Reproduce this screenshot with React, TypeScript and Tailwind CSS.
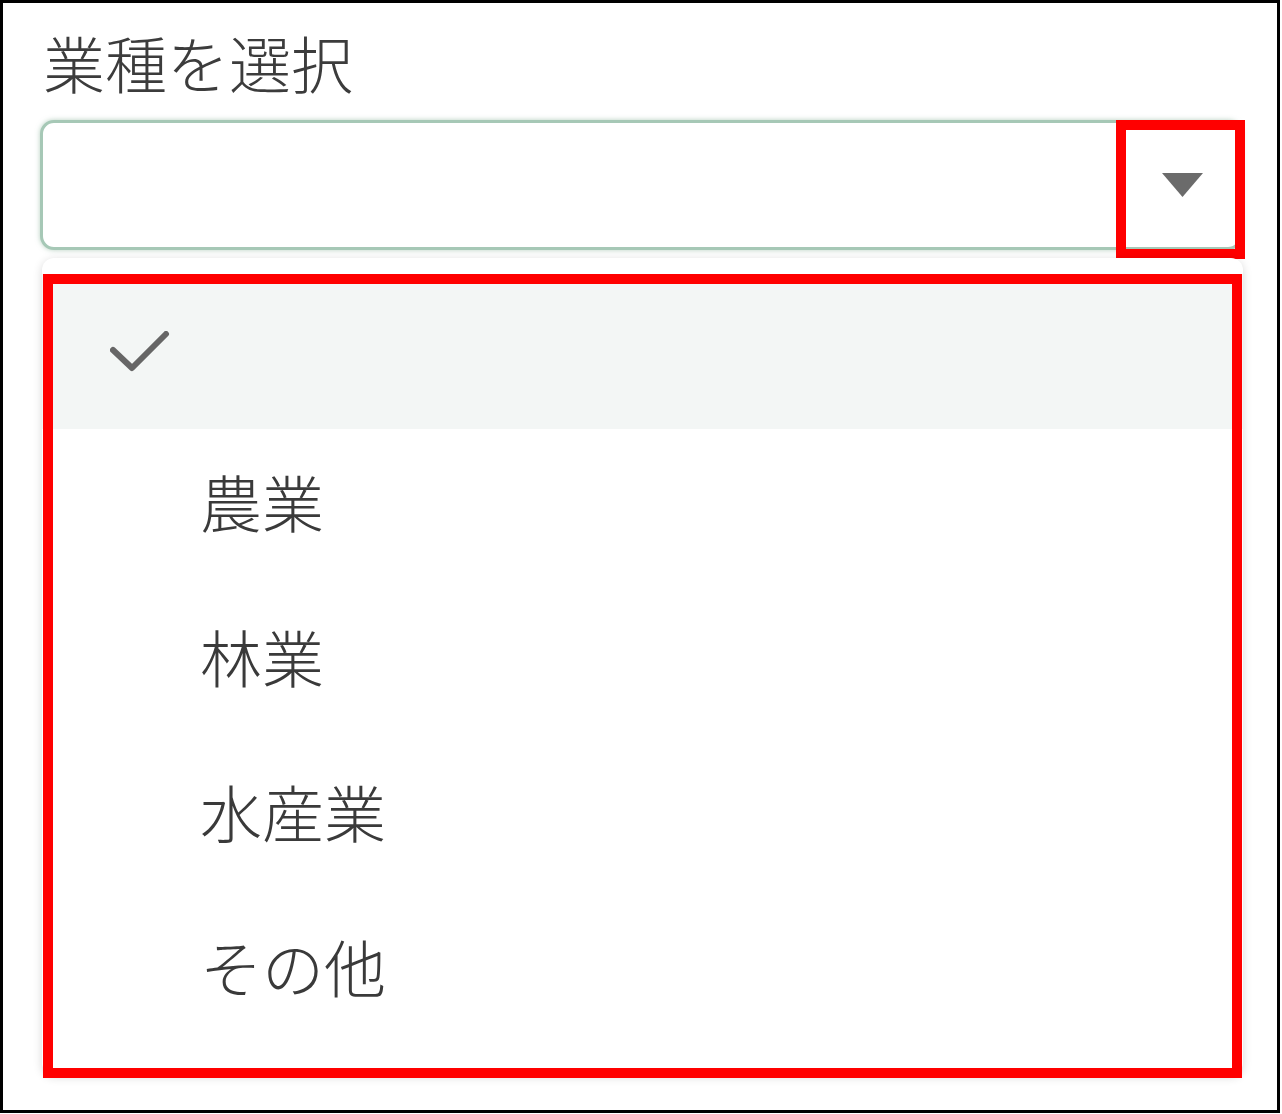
import React from "react";

const font = { fontFamily: '"Noto Sans CJK JP", "Noto Sans", sans-serif' };

function Check() {
  return (
    <svg width="60" height="42" viewBox="0 0 60 42" fill="none">
      <polyline
        points="3,19 22,37 56,3"
        stroke="#666666"
        strokeWidth="6"
        strokeLinecap="round"
        strokeLinejoin="round"
      />
    </svg>
  );
}

export default function App() {
  const items = ["農業", "林業", "水産業", "その他"];
  return (
    <div className="w-[1280px] h-[1113px] border-[3px] border-black bg-white" style={font}>
      <div className="flex flex-col pl-[37px] pt-[28px]">
        <div className="ml-[3px] text-[62px] leading-[62px] text-[#3c3c3c] font-light">業種を選択</div>
        <div className="relative mt-[27px] w-[1202px]">
          <div className="h-[130px] w-full rounded-[14px] border-[3px] border-[#a6c8b6] bg-white shadow-[0_0_5px_rgba(110,160,130,0.5)] flex items-center justify-end pr-[36px]">
            <svg width="41" height="24" viewBox="0 0 41 24">
              <polygon points="0,0 41,0 20.5,24" fill="#6b6b6b" />
            </svg>
          </div>
          <div className="absolute right-[-3px] top-0 w-[129px] h-[139px] border-[10px] border-[#ff0000]" />
        </div>
        <div className="relative mt-[8px] ml-[2px] w-[1201px] rounded-[12px] bg-white shadow-[0_2px_10px_rgba(0,0,0,0.16)] pt-[16px] pb-[26px]">
          <div className="h-[155px] bg-[#f3f6f5] flex items-center pl-[68px]">
            <Check />
          </div>
          {items.map((t) => (
            <div key={t} className="h-[155px] flex items-center pl-[158px] pb-[11px] text-[62px] leading-[62px] text-[#3a3a3a] font-light">
              {t}
            </div>
          ))}
          <div className="absolute left-[1px] top-[16px] w-[1199px] h-[804px] border-[10px] border-[#ff0000]" />
        </div>
      </div>
    </div>
  );
}
